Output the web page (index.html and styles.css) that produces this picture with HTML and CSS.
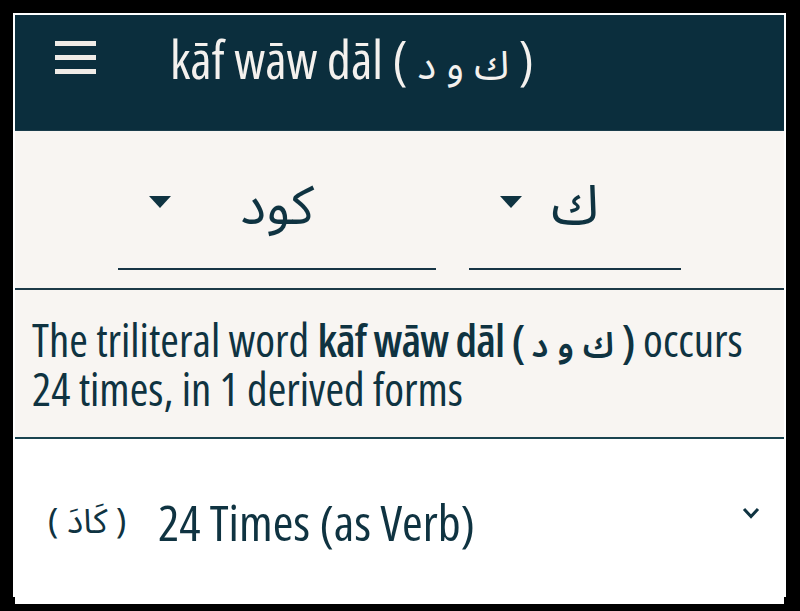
FILE: index.html
```html
<!DOCTYPE html>
<html lang="en">
<head>
    <meta charset="UTF-8">
    <meta name="viewport" content="width=device-width, initial-scale=1.0">
    <title>kāf wāw dāl</title>
    <link rel="stylesheet" href="styles.css">
</head>
<body>
    <div class="frame">
        <div class="app">
            <header class="toolbar">
                <svg class="menu-icon" width="41" height="34" viewBox="0 0 41 34">
                    <rect x="0" y="0" width="41" height="5"/>
                    <rect x="0" y="14" width="41" height="5"/>
                    <rect x="0" y="28" width="41" height="5"/>
                </svg>
                <h1 class="title">kāf wāw dāl ( <span class="ar">ك و د</span> )</h1>
            </header>

            <div class="pickers">
                <div class="picker picker-wide">
                    <span class="caret"></span>
                    <span class="picker-value" lang="ar" dir="rtl">كود</span>
                </div>
                <div class="picker picker-narrow">
                    <span class="caret"></span>
                    <span class="picker-value" lang="ar" dir="rtl">ك</span>
                </div>
            </div>

            <div class="summary">
                <p>The triliteral word <b>kāf wāw dāl ( <span class="ar">ك و د</span> )</b> occurs 24 times, in 1 derived forms</p>
            </div>

            <div class="forms">
                <div class="form-row">
                    <span class="form-word">( <span lang="ar">كَادَ</span> )</span>
                    <span class="form-count">24 Times (as Verb)</span>
                    <svg class="chevron" width="18" height="12" viewBox="0 0 18 12">
                        <polyline points="2,2 9,9.5 16,2"/>
                    </svg>
                </div>
            </div>
        </div>
    </div>
</body>
</html>
```
FILE: styles.css
```css
body {
    margin: 0;
    background-color: #000;
    font-family: "Open Sans", "Noto Sans Arabic", "DejaVu Sans", sans-serif;
    font-stretch: 75%;
    color: #0f3341;
}
.frame {
    padding: 13px 14px 14px 13px;
}
.app {
    border: 2px solid #fff;
    height: 580px;
    display: flex;
    flex-direction: column;
    background-color: #fff;
}
.ar {
    font-family: "Noto Sans Arabic", "DejaVu Sans", sans-serif;
    font-size: 0.76em;
    line-height: 1;
}
.toolbar {
    height: 116px;
    background-color: #0b2e3d;
    border-bottom: 1px solid #1a3c4b;
    display: flex;
    align-items: flex-start;
    padding: 14px 0 0 40px;
    box-sizing: border-box;
    flex-shrink: 0;
}
.menu-icon {
    margin-top: 12px;
    fill: #efebe7;
}
.title {
    margin: 0 0 0 74px;
    font-size: 52px;
    line-height: 60px;
    font-weight: normal;
    color: #f4f1ee;
    white-space: nowrap;
}
.pickers {
    background-color: #f8f5f2;
    border-bottom: 2px solid #1d3a48;
    height: 157px;
    display: flex;
    justify-content: center;
    gap: 33px;
    flex-shrink: 0;
}
.picker {
    margin-top: 40px;
    height: 97px;
    border-bottom: 2px solid #173545;
    display: grid;
    grid-template-columns: 1fr auto 1fr;
    align-items: start;
}
.picker-wide {
    width: 318px;
}
.picker-narrow {
    width: 212px;
}
.caret {
    margin: 25px 0 0 31px;
    width: 0;
    height: 0;
    border-left: 11px solid transparent;
    border-right: 11px solid transparent;
    border-top: 12px solid #0f3341;
}
.picker-value {
    font-family: "Noto Sans Arabic", "DejaVu Sans", sans-serif;
    font-size: 54px;
    line-height: 80px;
    margin-top: -4px;
    color: #0f3341;
}
.summary {
    background-color: #f8f5f2;
    border-bottom: 2px solid #1b4450;
    padding: 25px 8px 24px 17px;
    flex-shrink: 0;
}
.summary p {
    margin: 0;
    font-size: 45px;
    line-height: 49px;
}
.summary b {
    font-weight: 600;
    letter-spacing: -0.02em;
}
.forms {
    flex: 1;
    background-color: #fff;
}
.form-row {
    display: flex;
    align-items: center;
    height: 165px;
    padding: 0 24px 0 33px;
}
.form-word {
    font-family: "Noto Sans Arabic", "DejaVu Sans", sans-serif;
    font-size: 34px;
    width: 110px;
    flex-shrink: 0;
}
.form-count {
    font-size: 50px;
    flex: 1;
}
.chevron {
    margin-bottom: 18px;
    fill: none;
    stroke: #0f3341;
    stroke-width: 3;
}
```
